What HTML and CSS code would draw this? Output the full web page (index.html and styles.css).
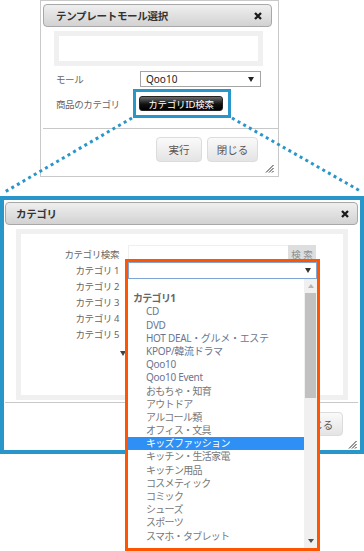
FILE: index.html
```html
<!DOCTYPE html>
<html lang="ja">
<head>
<meta charset="utf-8">
<title>カテゴリ</title>
<link rel="stylesheet" href="styles.css">
</head>
<body>
<div class="page">
  <section class="dlg-top">
    <header class="titlebar tb-top">
      <span class="title">テンプレートモール選択</span>
      <svg class="close" viewBox="0 0 8 8"><path d="M1 1L7 7M7 1L1 7"/></svg>
    </header>
    <div class="msgbox"></div>
    <div class="form">
      <span class="lbl">モール</span>
      <div class="select sel-mall"><span>Qoo10</span><span class="arr"></span></div>
      <span class="lbl">商品のカテゴリ</span>
      <div class="btnwrap"><span class="btn-dark">カテゴリID検索</span><span class="hl"></span></div>
    </div>
    <div class="sep"></div>
    <div class="actions">
      <span class="btn btn-run">実行</span><span class="btn btn-close">閉じる</span>
    </div>
    <svg class="grip" viewBox="0 0 9 9"><path d="M1 8.5L8.5 1M4 8.5L8.5 4M7 8.5L8.5 7"/></svg>
  </section>

  <section class="frame">
    <header class="titlebar tb-cat">
      <span class="title">カテゴリ</span>
      <svg class="close" viewBox="0 0 8 8"><path d="M1 1L7 7M7 1L1 7"/></svg>
    </header>
    <div class="panel">
      <span class="lbl2">カテゴリ検索</span>
      <div class="search"><span class="search-in"></span><span class="search-btn">検 索</span></div>
      <span class="lbl2">カテゴリ 1</span><span></span>
      <span class="lbl2">カテゴリ 2</span><span></span>
      <span class="lbl2">カテゴリ 3</span><span></span>
      <span class="lbl2">カテゴリ 4</span><span></span>
      <span class="lbl2">カテゴリ 5</span><span></span>
      <span class="more"><span class="tri"></span></span><span></span>
    </div>
    <div class="sep sep2"></div>
    <div class="actions actions2">
      <span class="btn btn-close2">閉じる</span>
    </div>
    <svg class="grip grip2" viewBox="0 0 9 9"><path d="M1 8.5L8.5 1M4 8.5L8.5 4M7 8.5L8.5 7"/></svg>
  </section>

  <div class="dropdown">
    <div class="dd-select"><span class="arr"></span></div>
    <div class="dd-body">
      <ul class="dd-list">
        <li class="opt"></li>
        <li class="grp">カテゴリ1</li>
        <li class="opt lat">CD</li>
        <li class="opt lat">DVD</li>
        <li class="opt lat">HOT DEAL・グルメ・エステ</li>
        <li class="opt lat">KPOP/韓流ドラマ</li>
        <li class="opt lat">Qoo10</li>
        <li class="opt lat">Qoo10 Event</li>
        <li class="opt">おもちゃ・知育</li>
        <li class="opt">アウトドア</li>
        <li class="opt">アルコール類</li>
        <li class="opt">オフィス・文具</li>
        <li class="opt sel">キッズファッション</li>
        <li class="opt">キッチン・生活家電</li>
        <li class="opt">キッチン用品</li>
        <li class="opt">コスメティック</li>
        <li class="opt">コミック</li>
        <li class="opt">シューズ</li>
        <li class="opt">スポーツ</li>
        <li class="opt">スマホ・タブレット</li>
      </ul>
      <div class="sbar">
        <span class="sb-btn"><span class="up"></span></span>
        <span class="thumb"></span>
        <span class="track"></span>
        <span class="sb-btn"><span class="down"></span></span>
      </div>
    </div>
  </div>

  <svg class="dots" viewBox="0 0 364 551">
    <path d="M132 118L3 193M232 118L362 192"/>
  </svg>
</div>
</body>
</html>
```

FILE: styles.css
```css
* { box-sizing: border-box; }
html, body { margin: 0; padding: 0; }
body {
  width: 364px; height: 551px; overflow: hidden; background: #fff;
  font-family: "Noto Sans", "Noto Sans CJK JP", sans-serif;
  font-size: 10px; color: #555;
}
.page { position: relative; width: 364px; height: 551px; }

/* title bars */
.titlebar {
  height: 23px; border: 1px solid #a8a8a8; border-radius: 4px;
  background: linear-gradient(#efefef, #d2d2d2);
  display: flex; align-items: center; justify-content: space-between;
}
.title { font-weight: bold; font-size: 10.5px; color: #333; letter-spacing: -0.3px; }
.close { width: 8px; height: 8px; }
.close path { stroke: #1a1a1a; stroke-width: 2.3; fill: none; }
.grip { width: 9px; height: 9px; }
.grip path { stroke: #333; stroke-width: 1; fill: none; }

/* top dialog */
.dlg-top {
  margin-left: 40px; width: 239px; height: 177px;
  border: 1px solid #c9c9c9; padding: 3px 0 2px 0;
  display: flex; flex-direction: column; background: #fff;
}
.tb-top { margin: 0 6px 0 2px; padding: 0 9px 0 12px; }
.msgbox { margin: 4px 0 0 13px; width: 209px; height: 35px; border: 5px solid #f0f0f0; }
.form {
  margin: 5px 0 0 15px; display: grid;
  grid-template-columns: 84px 121px; grid-template-rows: 16px 15px;
  row-gap: 9px; align-items: center;
}
.lbl { font-size: 9.5px; color: #666; letter-spacing: -0.4px; }
.select {
  height: 16px; border: 1px solid #a5a5a5; background: #fff;
  display: flex; align-items: center; justify-content: space-between;
  padding: 0 6px 0 5px; font-size: 10px; color: #222;
}
.arr {
  width: 0; height: 0; border-left: 3px solid transparent; border-right: 3px solid transparent;
  border-top: 5px solid #222;
}
.btnwrap { position: relative; width: 84px; height: 15px; margin-left: -1px; }
.btn-dark {
  display: flex; align-items: center; justify-content: center;
  width: 84px; height: 15px; border: 1px solid #222; border-radius: 3px;
  background: linear-gradient(#6a6a6a, #111 55%, #000);
  color: #fff; font-size: 9.5px; letter-spacing: -0.2px;
}
.hl {
  position: absolute; top: -7px; bottom: -7px; left: -6px; right: -8px;
  border: 3px solid #2996c9;
}
.sep { margin: 17px 0 0 2px; border-top: 1px solid #c8c8c8; height: 0; }
.actions { margin-top: 8px; display: flex; justify-content: flex-end; gap: 5px; padding-right: 20px; }
.btn {
  display: flex; align-items: center; justify-content: center; height: 25px;
  border: 1px solid #dcdcdc; border-radius: 4px;
  background: linear-gradient(#fafafa, #e4e4e4); color: #555; font-size: 10.5px;
}
.btn-run { width: 46px; }
.btn-close { width: 51px; }
.dlg-top .grip { margin-top: auto; align-self: flex-end; margin-right: 4px; margin-bottom: 1px; }

/* category frame */
.frame {
  margin-top: 19px; width: 364px; height: 258px;
  border: 4px solid #2996c9; display: flex; flex-direction: column; background: #fff;
}
.tb-cat { margin: 2px 2px 0 1px; padding: 0 8px 0 10px; flex: none; }
.panel {
  margin: 4px 0 0 12px; width: 332px; height: 171px; flex: none;
  border: 5px solid #f0f0f0; padding-top: 11px;
  display: grid; grid-template-columns: 98px 1fr; column-gap: 9px;
  grid-template-rows: 17px repeat(5, 16px) 16px; align-items: center;
}
.lbl2 { text-align: right; font-size: 9.5px; color: #666; letter-spacing: -0.4px; }
.search { display: flex; height: 17px; }
.search-in { width: 160px; height: 17px; border: 1px solid #efefef; border-right: none; background: #fff; }
.search-btn {
  width: 28px; height: 17px; background: #dedede; color: #8e8e8e;
  font-size: 9.5px; display: flex; align-items: center; justify-content: center;
}
.more { display: flex; justify-content: flex-end; margin-right: -7px; padding-top: 6px; }
.tri {
  width: 0; height: 0; border-left: 3px solid transparent; border-right: 3px solid transparent;
  border-top: 5px solid #444;
}
.sep2 { margin: 2px 2px 0 1px; flex: none; }
.actions2 { margin-top: 9px; padding-right: 17px; flex: none; }
.btn-close2 { width: 51px; height: 24px; }
.grip2 { margin-top: 4px; align-self: flex-end; margin-right: 3px; flex: none; }

/* dropdown overlay */
.dropdown {
  position: absolute; left: 125px; top: 259px; width: 195px; height: 292px;
  border: 3px solid #ff5400; background: #fff;
  display: flex; flex-direction: column;
}
.dd-select {
  height: 17px; flex: none; border: 1px solid #7fa6d6; background: #fff;
  display: flex; align-items: center; justify-content: flex-end; padding-right: 5px;
}
.dd-select .arr { border-top-color: #333; }
.dd-body { flex: 1; display: flex; min-height: 0; overflow: hidden; }
.dd-list { list-style: none; margin: 0; padding: 0; width: 176px; overflow: hidden; }
.dd-list li { height: 13.2px; line-height: 13.2px; font-size: 10px; white-space: nowrap; letter-spacing: -0.7px; }
.grp { padding-left: 5px; font-weight: bold; color: #666; }
.opt { padding-left: 18px; color: #777; }
.opt.lat { color: #6a7690; letter-spacing: -0.3px; }
.opt.sel { background: #2e8ff5; color: #fff; }
.sbar { width: 13px; display: flex; flex-direction: column; background: #f0f0f0; }
.sb-btn { height: 14px; flex: none; display: flex; align-items: center; justify-content: center; }
.up {
  width: 0; height: 0; border-left: 3px solid transparent; border-right: 3px solid transparent;
  border-bottom: 4px solid #b5b5b5;
}
.down {
  width: 0; height: 0; border-left: 3px solid transparent; border-right: 3px solid transparent;
  border-top: 4px solid #505050;
}
.thumb { height: 105px; flex: none; background: #c1c1c1; margin: 0 1px; }
.track { flex: 1; }

/* dotted connector */
.dots { position: absolute; left: 0; top: 0; width: 364px; height: 551px; pointer-events: none; }
.dots path { stroke: #2996c9; stroke-width: 3; stroke-dasharray: 3 3.5; fill: none; }
```
